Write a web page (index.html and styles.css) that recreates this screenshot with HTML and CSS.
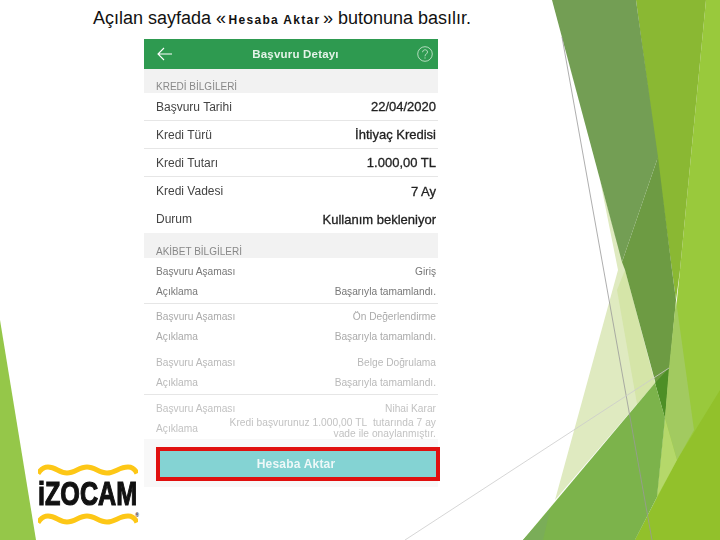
FILE: index.html
```html
<!DOCTYPE html>
<html lang="tr">
<head>
    <meta charset="UTF-8">
    <title>Hesaba Aktar</title>
    <link rel="stylesheet" href="styles.css">
</head>
<body>
    <div class="slide">
        <svg class="slide-bg" width="720" height="540" viewBox="0 0 720 540">
            <polygon fill="#95c749" points="0,320 36,540 0,540"/>
            <!-- sag taraftaki yesil sekiller -->
            <polygon fill="#dfeac0" points="600,180 625,270 655,383 555,500 618,270"/>
            <polygon fill="#d5e5a8" points="625,270 655,383 637,404 617,290"/>
            <polygon fill="#99c93c" points="706,0 720,0 720,540 635,540 657,497 665,418 680,270"/>
            <polygon fill="#92c12b" points="720,390 677,460 635,540 720,540"/>
            <polygon fill="#8ab833" points="636,0 706,0 680,270 676,300 672,270"/>
            <polygon fill="#6d9b43" points="622,262 658,157 672,270 676,300 665,418 625,270"/>
            <polygon fill="#739e54" points="552,0 636,0 658,157 622,262"/>
            <polygon fill="#4d8f26" points="655,383 669,368 665,418"/>
            <polygon fill="#a2ca60" points="669,368 676,300 694,430 677,460 665,418"/>
            <polygon fill="#b5d86a" points="657,497 665,418 677,460"/>
            <polygon fill="#7cb34b" points="655,383 665,418 657,497 635,540 523,540"/>
            <polygon fill="#7aad58" points="523,540 550,510 543,540"/>
            <line x1="562" y1="37" x2="652" y2="540" stroke="#999" stroke-width="0.8"/>
            <line x1="405" y1="540" x2="669" y2="368" stroke="#ccc" stroke-width="0.8"/>
        </svg>

        <h1 class="title">Açılan sayfada «<span class="title-small">Hesaba Aktar</span>» butonuna basılır.</h1>

        <div class="phone">
            <div class="top-bar">
                <svg class="icon" width="18" height="14" viewBox="0 0 18 14">
                    <path d="M16 7H2M8 1L2 7l6 6" fill="none" stroke="#fff" stroke-width="1.1"/>
                </svg>
                <span class="top-title">Başvuru Detayı</span>
                <svg class="icon" width="16" height="16" viewBox="0 0 16 16">
                    <circle cx="8" cy="8" r="7.3" fill="none" stroke="#d5ecd9" stroke-width="0.8"/>
                    <path d="M5.6 6.2c0-3.2 4.9-3.2 4.9-.2 0 1.900-2.500 2-2.500 4.300M8 11.400v1.200" fill="none" stroke="#d5ecd9" stroke-width="0.8"/>
                </svg>
            </div>

            <div class="band band-first">KREDİ BİLGİLERİ</div>
            <div class="info">
                <div class="info-row line"><span>Başvuru Tarihi</span><span class="val">22/04/2020</span></div>
                <div class="info-row line"><span>Kredi Türü</span><span class="val">İhtiyaç Kredisi</span></div>
                <div class="info-row line"><span>Kredi Tutarı</span><span class="val">1.000,00 TL</span></div>
                <div class="info-row"><span>Kredi Vadesi</span><span class="val">7 Ay</span></div>
                <div class="info-row"><span>Durum</span><span class="val">Kullanım bekleniyor</span></div>
            </div>

            <div class="band band-second">AKİBET BİLGİLERİ</div>
            <div class="step step-1 line">
                <div class="step-row"><span>Başvuru Aşaması</span><span>Giriş</span></div>
                <div class="step-row"><span>Açıklama</span><span>Başarıyla tamamlandı.</span></div>
            </div>
            <div class="step step-2">
                <div class="step-row"><span>Başvuru Aşaması</span><span>Ön Değerlendirme</span></div>
                <div class="step-row"><span>Açıklama</span><span>Başarıyla tamamlandı.</span></div>
            </div>
            <div class="step step-3 line">
                <div class="step-row"><span>Başvuru Aşaması</span><span>Belge Doğrulama</span></div>
                <div class="step-row"><span>Açıklama</span><span>Başarıyla tamamlandı.</span></div>
            </div>
            <div class="step step-4">
                <div class="step-row"><span>Başvuru Aşaması</span><span>Nihai Karar</span></div>
                <div class="step-row tall"><span>Açıklama</span><span class="long">Kredi başvurunuz 1.000,00 TL&nbsp; tutarında 7 ay vade ile onaylanmıştır.</span></div>
            </div>

            <div class="bottom">
                <div class="aktar-box"><div class="aktar">Hesaba Aktar</div></div>
            </div>
        </div>

        <div class="logo">
            <svg class="wave" width="100" height="12" viewBox="0 0 100 12">
                <path d="M0 9.500C3 5 6 3 10 3c8 0 11 6 19 6s12-6 20-6 12 6 20 6 12-6 21-6c4 0 7 2 9 6.500" fill="none" stroke="#fdc716" stroke-width="5"/>
            </svg>
            <div class="logo-name"><span>iZOCAM</span><small>®</small></div>
            <svg class="wave" width="100" height="12" viewBox="0 0 100 12">
                <path d="M0 9.500C3 5 6 3 10 3c8 0 11 6 19 6s12-6 20-6 12 6 20 6 12-6 21-6c4 0 7 2 9 6.500" fill="none" stroke="#fdc716" stroke-width="5"/>
            </svg>
        </div>
    </div>
</body>
</html>
```

FILE: styles.css
```css
body {
    margin: 0;
    font-family: "Liberation Sans", Arial, sans-serif;
    background: #fff;
}

.slide {
    position: relative;
    width: 720px;
    height: 540px;
    overflow: hidden;
}

.slide-bg {
    position: absolute;
    left: 0;
    top: 0;
}

/* baslik */
.title {
    position: relative;
    margin: 0;
    padding: 8px 0 0 93px;
    height: 39px;
    box-sizing: border-box;
    font-size: 18px;
    line-height: 21px;
    font-weight: normal;
    color: #111;
}

.title-small {
    margin: 0 2.500px;
    font-size: 12px;
    font-weight: bold;
    letter-spacing: 1.300px;
}

/* telefon ekrani */
.phone {
    position: relative;
    width: 294px;
    margin-left: 144px;
    background: #fff;
    filter: blur(0.3px);
}

.top-bar {
    height: 30px;
    padding: 0 5px 0 12px;
    display: flex;
    align-items: center;
    justify-content: space-between;
    background: #2e9a50;
}

.top-title {
    font-size: 11.500px;
    font-weight: bold;
    color: #e4f3e8;
    letter-spacing: 0.2px;
}

.band {
    display: flex;
    align-items: flex-end;
    padding: 0 12px 1px;
    box-sizing: border-box;
    background: #f2f2f2;
    font-size: 10px;
    line-height: 11px;
    color: #888;
}

.band-first {
    height: 24px;
}

.band-second {
    height: 25px;
}

.info-row {
    height: 28px;
    padding: 0 2px 0 12px;
    box-sizing: border-box;
    display: flex;
    align-items: center;
    justify-content: space-between;
    font-size: 12px;
    color: #444;
}

.val {
    font-size: 13px;
    color: #222;
    -webkit-text-stroke: 0.3px #222;
}

.line {
    border-bottom: 1px solid #e6e6e6;
}

/* akibet satirlari */
.step {
    padding: 3px 2px 2px 12px;
    font-size: 10.200px;
}

.step-1 {
    color: #777;
}

.step-2 {
    padding-top: 2px;
    padding-bottom: 3px;
    color: #aaa;
}

.step-3 {
    color: #b9b9b9;
}

.step-4 {
    padding-bottom: 0;
    color: #c2c2c2;
}

.step-row {
    height: 20px;
    display: flex;
    align-items: center;
    justify-content: space-between;
}

.step-row.tall {
    height: 22px;
    margin-top: -1px;
}

.long {
    width: 210px;
    text-align: right;
    line-height: 11px;
    letter-spacing: 0.05px;
}

.bottom {
    height: 48px;
    padding: 8px 0 0 12px;
    box-sizing: border-box;
    background: #f8f8f8;
}

.aktar-box {
    width: 284px;
    height: 34px;
    padding: 4px;
    box-sizing: border-box;
    background: #e0100f;
}

.aktar {
    height: 100%;
    padding-right: 4px;
    box-sizing: border-box;
    display: flex;
    align-items: center;
    justify-content: center;
    background: #84d3d3;
    color: #eef8f8;
    font-size: 12px;
    font-weight: bold;
    letter-spacing: 0.2px;
}

/* logo */
.logo {
    position: absolute;
    left: 38px;
    top: 464px;
    width: 100px;
}

.wave {
    display: block;
}

.logo-name {
    position: relative;
    height: 37px;
    padding-top: 3px;
    box-sizing: border-box;
    font-size: 34px;
    line-height: 28px;
    font-weight: bold;
    color: #111;
    white-space: nowrap;
}

.logo-name span {
    display: inline-block;
    transform: scaleX(0.74);
    transform-origin: left;
    -webkit-text-stroke: 1.2px #111;
}

.logo-name small {
    position: absolute;
    z-index: 1;
    right: -1px;
    bottom: -5px;
    font-size: 5px;
    line-height: 5px;
}

.icon {
    display: block;
}
```
